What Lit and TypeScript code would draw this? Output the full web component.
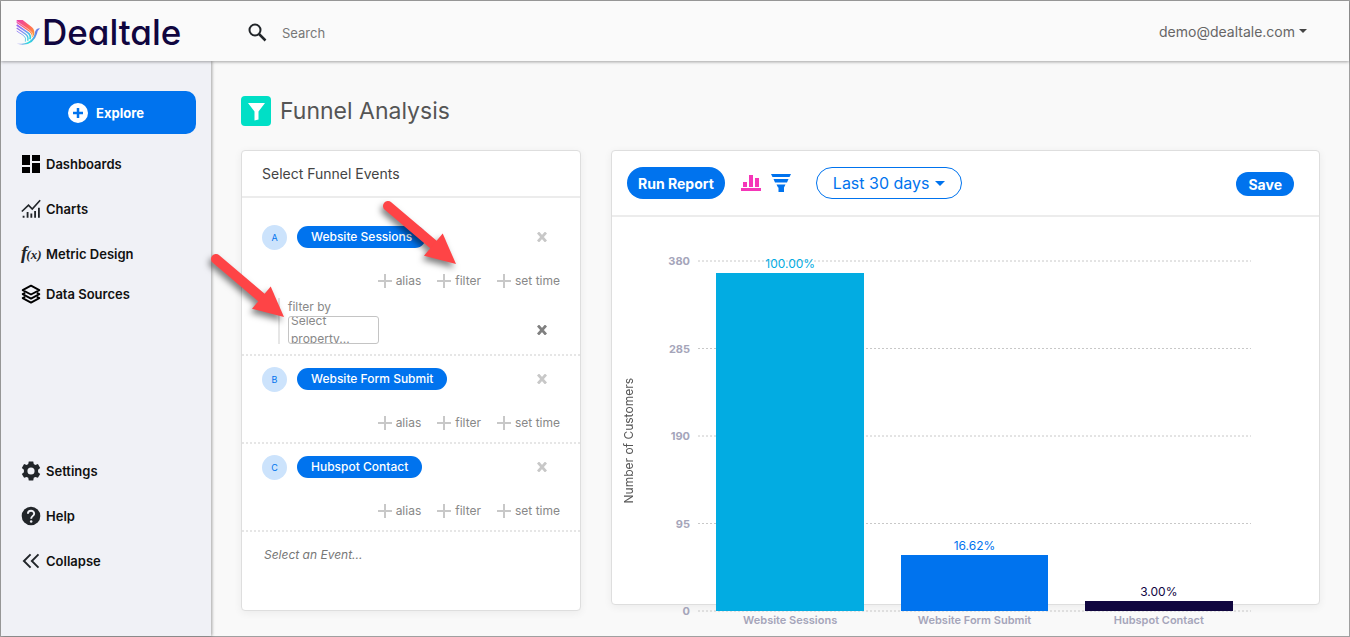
import { LitElement, html, css, svg, nothing } from "lit";
import { customElement, property, state } from "lit/decorators.js";
import { styleMap } from "lit/directives/style-map.js";

const cross = html`<svg width="10" height="10" viewBox="0 0 10 10" aria-hidden="true">
  <path d="M1 0.500L9 9.500M9 0.500L1 9.500" stroke="currentColor" stroke-width="2.800" fill="none" />
</svg>`;

const plus = html`<svg width="14" height="14" viewBox="0 0 14 14" aria-hidden="true">
  <path d="M7 0V14M0 7H14" stroke="#c8c8c8" stroke-width="2" fill="none" />
</svg>`;

const caret = html`<svg width="10" height="5" viewBox="0 0 10 5" aria-hidden="true">
  <path d="M0 0H10L5 5Z" fill="currentColor" />
</svg>`;

const icons = {
  dashboards: svg`<path fill="#000" d="M1.200 1.200h9.600v12H1.200zM13.200 1.200h9.600v7.200h-9.600zM13.200 10.800h9.600v12h-9.600zM1.200 15.600h9.600v7.200H1.200z"/>`,
  charts: svg`<path d="M1 15L9 7.500L13.500 12L23 1.500" fill="none" stroke="#212529" stroke-width="2"/>
    <path fill="#212529" d="M2 20h2.200v2.500H2zM6.800 15.500H9v7H6.800zM11.300 17.500h2.200v5h-2.200zM15.800 14.500H18v8h-2.200zM20.400 10.500h2.200v12h-2.200z"/>`,
  sources: svg`<g fill="none" stroke="#000" stroke-width="2.200" stroke-linejoin="round">
    <path d="M12 2L22 7.300L12 12.600L2 7.300Z"/><path d="M5 10.500L2 12.200L12 17.500L22 12.200L19 10.500"/><path d="M5 15.300L2 17L12 22.300L22 17L19 15.300"/></g>`,
  settings: svg`<path fill="#212529" fill-rule="evenodd" d="M9.300 0.500h5.400l.6 3.200 1.900 1.100 3.100-1.100 2.700 4.600-2.500 2.200v2.900l2.500 2.200-2.700 4.600-3.100-1.100-1.900 1.100-.6 3.300H9.300l-.6-3.300-1.900-1.100-3.100 1.100L1 15.600l2.500-2.200v-2.900L1 8.300l2.700-4.600 3.100 1.100 1.900-1.100zM12 7.700a4.300 4.300 0 1 0 0 8.600a4.300 4.300 0 1 0 0-8.600z"/>`,
  help: svg`<circle cx="12" cy="12" r="11.200" fill="#212529"/>
    <path d="M8.300 9.300C8.300 4.500 15.800 4.500 15.800 9.200C15.800 11.800 12.200 12 12.200 15.300" fill="none" stroke="#f0f1f6" stroke-width="2.300"/>
    <circle cx="12.200" cy="18.600" r="1.500" fill="#f0f1f6"/>`,
  collapse: svg`<path d="M11.500 4L3.500 12L11.500 20M21 4L13 12L21 20" fill="none" stroke="#212529" stroke-width="2.300"/>`,
};

type IconName = keyof typeof icons | "metric";

interface FunnelEvent {
  key: string;
  name: string;
  filtering?: boolean;
}

interface Bar {
  name: string;
  count: number;
  rate: string;
  color: string;
}

const reset = css`
  :host,
  * {
    box-sizing: border-box;
  }
  button,
  input,
  select {
    font: inherit;
    color: inherit;
    background: none;
    border: 0;
    margin: 0;
    padding: 0;
  }
  button {
    cursor: pointer;
  }
  a {
    color: inherit;
    text-decoration: none;
  }
  svg {
    display: block;
    flex: none;
  }
`;

@customElement("side-link")
class SideLink extends LitElement {
  @property() label = "";
  @property() icon: IconName = "dashboards";

  static styles = [
    reset,
    css`
      :host {
        display: block;
      }
      .link {
        display: flex;
        align-items: center;
        gap: 5px;
        height: 100%;
        font-size: 13px;
        font-weight: 600;
        line-height: 20px;
        color: #111;
      }
      .formula {
        display: flex;
        align-items: baseline;
        width: 20px;
        font: italic 700 19px/20px "Liberation Serif", serif;
        color: #212529;
        white-space: nowrap;
      }
      .formula small {
        margin-left: -1px;
        font-size: 13px;
      }
    `,
  ];

  render() {
    return html`<a class="link" href="#">
      ${this.icon === "metric"
        ? html`<span class="formula" aria-hidden="true">f<small>(x)</small></span>`
        : html`<svg width="20" height="20" viewBox="0 0 24 24" aria-hidden="true">${icons[this.icon]}</svg>`}
      ${this.label}
    </a>`;
  }
}

@customElement("funnel-step")
class FunnelStep extends LitElement {
  @property({ attribute: false }) event!: FunnelEvent;

  static styles = [
    reset,
    css`
      :host {
        display: block;
        padding: 11px 20px 10px;
        border-bottom: 2px dotted #e6e6e6;
        font-size: 12px;
        line-height: 18px;
        color: #888;
      }
      .head {
        display: flex;
        align-items: flex-start;
        gap: 10px;
      }
      .key {
        width: 25px;
        height: 25px;
        border-radius: 50%;
        background: #cce3fc;
        color: #0073ee;
        font-size: 9px;
        line-height: 25px;
        text-align: center;
      }
      .name {
        height: 22px;
        margin-top: 1px;
        padding: 0 14px;
        border-radius: 11px;
        background: #0073ee;
        color: #fff;
        font-weight: 500;
      }
      .remove {
        margin-left: auto;
        padding: 4px;
        margin-right: 9px;
        color: #c8c8c8;
      }
      .head .remove {
        margin-top: 3px;
      }
      .dark {
        color: #808080;
      }
      .actions {
        display: flex;
        justify-content: flex-end;
        gap: 16px;
        margin-top: 22px;
      }
      .action {
        display: flex;
        align-items: center;
        gap: 4px;
      }
      .filter {
        margin: 8px 0 0 16px;
        padding-left: 8px;
        border-left: 2px solid #e6e6e6;
      }
      .field {
        display: flex;
        align-items: center;
      }
      .select {
        display: flex;
        align-items: center;
        width: 91px;
        height: 28px;
        padding: 0 20px 0 2px;
        border: 1px solid #c4c4c4;
        border-radius: 3px;
        overflow: hidden;
        text-align: left;
      }
    `,
  ];

  render() {
    const { key, name, filtering } = this.event;
    return html`
      <div class="head">
        <span class="key">${key}</span>
        <button class="name">${name}</button>
        <button class="remove" aria-label="Remove ${name}">${cross}</button>
      </div>
      <div class="actions">
        ${["alias", "filter", "set time"].map((a) => html`<button class="action">${plus}${a}</button>`)}
      </div>
      ${filtering
        ? html`<div class="filter">
            <div id="by">filter by</div>
            <div class="field">
              <button class="select" aria-haspopup="listbox" aria-describedby="by">Select property...</button>
              <button class="remove dark" aria-label="Remove filter">${cross}</button>
            </div>
          </div>`
        : nothing}
    `;
  }
}

@customElement("funnel-chart")
class FunnelChart extends LitElement {
  @property({ attribute: false }) bars: Bar[] = [];
  @property({ type: Number }) max = 380;

  static styles = [
    reset,
    css`
      :host {
        display: grid;
        grid-template-columns: 18px 52px 1fr;
        grid-template-rows: 350px auto;
        padding: 44px 68px 0 8px;
      }
      .title {
        justify-self: center;
        align-self: center;
        writing-mode: vertical-rl;
        transform: rotate(180deg);
        padding-bottom: 10px;
        font-size: 12px;
        line-height: 16px;
        color: #555;
      }
      .ticks {
        display: flex;
        flex-direction: column;
        justify-content: space-between;
      }
      .tick {
        display: flex;
        align-items: center;
        justify-content: flex-end;
        height: 0;
        font-size: 11px;
        font-weight: 700;
        color: #a5a5ba;
      }
      .lines,
      .bars,
      .names {
        margin-left: 8px;
      }
      .lines,
      .bars {
        grid-area: 1 / 3;
        height: 100%;
      }
      .lines {
        width: calc(100% - 8px);
        overflow: visible;
      }
      .bars,
      .names {
        display: flex;
      }
      .slot {
        flex: 1;
        display: flex;
        flex-direction: column;
        justify-content: flex-end;
        align-items: center;
      }
      .rate {
        font-size: 12px;
        line-height: 18px;
      }
      .bar {
        flex: none;
        width: 80%;
      }
      .names {
        grid-area: 2 / 3;
      }
      .name {
        flex: 1;
        text-align: center;
        font-size: 11px;
        font-weight: 600;
        line-height: 18px;
        color: #a5a5ba;
      }
    `,
  ];

  render() {
    const steps = [4, 3, 2, 1, 0];
    return html`
      <div class="title">Number of Customers</div>
      <div class="ticks">
        ${steps.map((s) => html`<span class="tick">${(this.max * s) / 4}</span>`)}
      </div>
      <svg class="lines" aria-hidden="true">
        ${steps.map(
          (s) => svg`<line x1="0" x2="100%" y1="${s * 25}%" y2="${s * 25}%" stroke="#c8c8c8" stroke-dasharray="2 2" />`
        )}
      </svg>
      <div class="bars">
        ${this.bars.map(
          (b) => html`<div class="slot">
            <span class="rate" style=${styleMap({ color: b.color })}>${b.rate}</span>
            <div class="bar" style=${styleMap({ background: b.color, height: `${(b.count / this.max) * 100}%` })}></div>
          </div>`
        )}
      </div>
      <div class="names">${this.bars.map((b) => html`<span class="name">${b.name}</span>`)}</div>
    `;
  }
}

const pointer = (place: string) => html`<svg class="pointer ${place}" width="80" height="70" viewBox="0 0 80 70" aria-hidden="true">
  <path d="M6 6L52 45" stroke="#fe4446" stroke-width="10" stroke-linecap="round" />
  <path d="M74 64L60.700 33.500L42 55.700Z" fill="#fe4446" />
</svg>`;

@customElement("app-root")
class AppRoot extends LitElement {
  @state() private events: FunnelEvent[] = [
    { key: "A", name: "Website Sessions", filtering: true },
    { key: "B", name: "Website Form Submit" },
    { key: "C", name: "Hubspot Contact" },
  ];

  @state() private bars: Bar[] = [
    { name: "Website Sessions", count: 367, rate: "100.00%", color: "#02ace2" },
    { name: "Website Form Submit", count: 61, rate: "16.62%", color: "#0073ee" },
    { name: "Hubspot Contact", count: 11, rate: "3.00%", color: "#10063f" },
  ];

  static styles = [
    reset,
    css`
      :host {
        position: relative;
        display: grid;
        grid-template: auto 1fr / 210px 1fr;
        min-height: 100vh;
        border: 1px solid #a0a0a0;
        background: #f9f9f9;
        font-family: Inter, "Liberation Sans", sans-serif;
        color: #555;
      }
      .top {
        grid-column: 1 / -1;
        z-index: 2;
        display: flex;
        align-items: center;
        height: 60px;
        padding: 2px 42px 0 15px;
        background: #fafafa;
        box-shadow: 0 1px 3px rgba(0, 0, 0, 0.35);
      }
      .logo {
        display: flex;
        align-items: center;
        width: 232px;
        gap: 1px;
        font-size: 35px;
        font-weight: 500;
        line-height: 40px;
        font-feature-settings: "cv11";
        color: #10063f;
      }
      .search {
        display: flex;
        align-items: center;
        flex: 1;
        gap: 15px;
      }
      .query {
        flex: 1;
        padding-top: 2px;
        font-size: 13px;
        line-height: 20px;
        outline: none;
      }
      .query::placeholder {
        color: #777;
        opacity: 1;
      }
      .account {
        display: flex;
        align-items: center;
        gap: 4px;
        font-size: 14px;
        line-height: 20px;
        color: #666;
      }
      .account svg {
        width: 8px;
        height: 4px;
        margin-bottom: 2px;
        color: #444;
      }
      .side {
        z-index: 1;
        display: flex;
        flex-direction: column;
        justify-content: space-between;
        padding: 30px 15px 53px;
        background: #f0f1f6;
        box-shadow: 1px 0 3px rgba(0, 0, 0, 0.35);
      }
      .explore {
        display: flex;
        align-items: center;
        justify-content: center;
        gap: 8px;
        width: 100%;
        height: 43px;
        margin-bottom: 7px;
        border-radius: 10px;
        background: #0073ee;
        color: #fff;
        font-size: 13px;
        font-weight: 700;
      }
      side-link {
        height: 45px;
        padding-left: 5px;
      }
      side-link.short {
        height: 35px;
      }
      .main {
        padding: 35px 29px 25px 30px;
        min-width: 0;
      }
      .heading {
        display: flex;
        align-items: center;
        gap: 9px;
        margin: 0 0 24px;
        font-size: 23px;
        font-weight: 400;
        line-height: 30px;
      }
      .cards {
        display: flex;
        align-items: flex-start;
        gap: 30px;
      }
      .card {
        border: 1px solid #dedede;
        border-radius: 4px;
        background: #fff;
        box-shadow: 0 2px 8px rgba(0, 0, 0, 0.06);
      }
      .events {
        flex: 0 0 340px;
        min-height: 461px;
      }
      .report {
        flex: 1;
        min-width: 0;
        height: 455px;
      }
      .subtitle {
        margin: 0;
        padding: 13px 20px 12px;
        border-bottom: 2px solid #ececec;
        font-size: 14px;
        font-weight: 400;
        line-height: 20px;
        color: #444;
      }
      .list {
        padding-top: 16px;
      }
      .new {
        width: 100%;
        padding: 14px 22px;
        font-size: 12px;
        font-style: italic;
        line-height: 18px;
        outline: none;
      }
      .new::placeholder {
        color: #777;
        opacity: 1;
      }
      .tools {
        display: flex;
        align-items: center;
        height: 66px;
        padding: 0 25px 0 15px;
        border-bottom: 2px solid #ececec;
      }
      .run,
      .save {
        background: #0073ee;
        color: #fff;
        font-size: 14px;
        font-weight: 700;
      }
      .run {
        height: 32px;
        padding: 0 11px;
        border-radius: 16px;
      }
      .save {
        height: 24px;
        margin: 2px 0 0 auto;
        padding: 0 12px;
        border-radius: 12px;
      }
      .kinds {
        display: flex;
        align-items: center;
        gap: 10px;
        margin: 0 25px 0 16px;
      }
      .range {
        display: grid;
        align-items: center;
        height: 32px;
        border: 1px solid #0073ee;
        border-radius: 16px;
        color: #0073ee;
      }
      .period {
        grid-area: 1 / 1;
        appearance: none;
        height: 30px;
        padding: 0 31px 0 16px;
        font-size: 16px;
        outline: none;
      }
      .range svg {
        grid-area: 1 / 1;
        justify-self: end;
        margin-right: 16px;
        pointer-events: none;
      }
      .pointer {
        position: absolute;
        z-index: 3;
        overflow: visible;
        pointer-events: none;
        filter: drop-shadow(-2px 4px 3px rgba(0, 0, 0, 0.5));
      }
      .to-filter {
        left: 381px;
        top: 199px;
      }
      .to-property {
        left: 209px;
        top: 252px;
      }
    `,
  ];

  render() {
    return html`
      <header class="top">
        <a class="logo" href="#">
          <svg width="25" height="26" viewBox="0 0 75 78" aria-hidden="true">
            <defs>
              <linearGradient id="warm" gradientUnits="userSpaceOnUse" x1="2" y1="4" x2="56" y2="50">
                <stop offset="0" stop-color="#e83fb0" />
                <stop offset=".5" stop-color="#ff5f63" />
                <stop offset="1" stop-color="#ffa030" />
              </linearGradient>
              <linearGradient id="cool" gradientUnits="userSpaceOnUse" x1="2" y1="16" x2="46" y2="56">
                <stop offset="0" stop-color="#a05cf0" />
                <stop offset=".5" stop-color="#7f8cf5" />
                <stop offset="1" stop-color="#26e0dc" />
              </linearGradient>
              <linearGradient id="tail" gradientUnits="userSpaceOnUse" x1="2" y1="74" x2="60" y2="40">
                <stop offset="0" stop-color="#b08cf5" />
                <stop offset=".5" stop-color="#26e0dc" />
                <stop offset="1" stop-color="#6a7fe8" />
              </linearGradient>
            </defs>
            <path d="M2 3H20L48 25Q58 34 54 48L47 57Q50 46 40 38L2 12Z" fill="url(#warm)" />
            <path d="M2 7L40 33Q53 42 50 52" fill="none" stroke="#fafafa" stroke-width="1.500" />
            <path d="M2 18L34 40Q46 48 42 61" fill="none" stroke="url(#cool)" stroke-width="5" />
            <path d="M2 27L28 45Q39 53 35 65" fill="none" stroke="url(#cool)" stroke-width="4" />
            <path d="M2 36L22 49Q32 56 28 68" fill="none" stroke="url(#cool)" stroke-width="2.500" />
            <path d="M2 74Q48 76 56 44Q58 28 72 28Q65 34 63 44Q54 76 20 77Z" fill="url(#tail)" />
          </svg>
          Dealtale
        </a>
        <label class="search">
          <svg width="19" height="19" viewBox="0 0 19 19" aria-hidden="true">
            <circle cx="7" cy="7" r="5.500" fill="none" stroke="#212529" stroke-width="2" />
            <path d="M11 11L17.500 17.500" stroke="#212529" stroke-width="2.500" />
          </svg>
          <input class="query" type="search" placeholder="Search" aria-label="Search" />
        </label>
        <button class="account" aria-haspopup="menu">demo@dealtale.com ${caret}</button>
      </header>

      <nav class="side">
        <div>
          <button class="explore">
            <svg width="20" height="20" viewBox="0 0 20 20" aria-hidden="true">
              <circle cx="10" cy="10" r="10" fill="#fff" />
              <path d="M10 5V15M5 10H15" stroke="#0073ee" stroke-width="2.500" />
            </svg>
            Explore
          </button>
          <side-link icon="dashboards" label="Dashboards"></side-link>
          <side-link icon="charts" label="Charts"></side-link>
          <side-link icon="metric" label="Metric Design"></side-link>
          <side-link class="short" icon="sources" label="Data Sources"></side-link>
        </div>
        <div>
          <side-link icon="settings" label="Settings"></side-link>
          <side-link icon="help" label="Help"></side-link>
          <side-link icon="collapse" label="Collapse"></side-link>
        </div>
      </nav>

      <main class="main">
        <h1 class="heading">
          <svg width="30" height="30" viewBox="0 0 30 30" aria-hidden="true">
            <rect width="30" height="30" rx="4" fill="#00dfc6" />
            <path d="M7 7H24L17.500 15.500V23.500L13.500 24.500V15.500Z" fill="#fff" />
          </svg>
          Funnel Analysis
        </h1>
        <div class="cards">
          <section class="card events">
            <h2 class="subtitle">Select Funnel Events</h2>
            <div class="list">
              ${this.events.map((e) => html`<funnel-step .event=${e}></funnel-step>`)}
              <input class="new" placeholder="Select an Event..." aria-label="Select an Event" />
            </div>
          </section>
          <section class="card report">
            <div class="tools">
              <button class="run">Run Report</button>
              <div class="kinds">
                <button aria-label="Bar chart">
                  <svg width="20" height="18" viewBox="0 0 20 18" aria-hidden="true">
                    <path fill="#f536b8" d="M2 8h4v5H2zM8 1h4v12H8zM14 4h4v9h-4zM0 14h20v3H0z" />
                  </svg>
                </button>
                <button aria-label="Funnel chart">
                  <svg width="20" height="18" viewBox="0 0 20 18" aria-hidden="true">
                    <path fill="#0073ee" d="M0 0H20L18.500 3H1.500ZM2.500 5H17.500L16 8.500H4ZM5.500 10.500H14.500L13 13.500V18H7.500V13.500H7Z" />
                  </svg>
                </button>
              </div>
              <div class="range">
                <select class="period" aria-label="Period">
                  <option>Last 30 days</option>
                </select>
                ${caret}
              </div>
              <button class="save">Save</button>
            </div>
            <funnel-chart .bars=${this.bars} max="380"></funnel-chart>
          </section>
        </div>
      </main>
      ${pointer("to-filter")}${pointer("to-property")}
    `;
  }
}
